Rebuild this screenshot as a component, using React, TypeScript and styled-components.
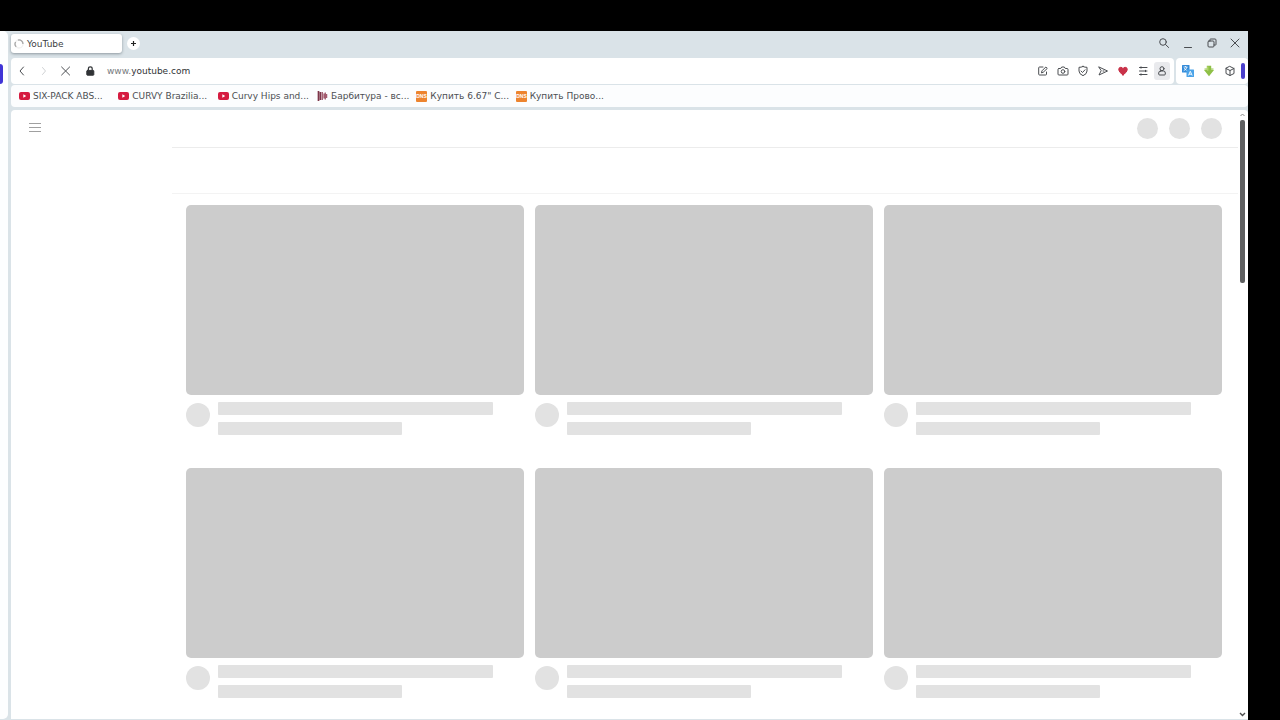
import React from "react";
import styled, { createGlobalStyle } from "styled-components";

const GlobalStyle = createGlobalStyle`
  *, *::before, *::after { box-sizing: border-box; }
  body { margin: 0; background: #000; font-family: "DejaVu Sans", sans-serif; color: #3c4043; }
  button, input { font: inherit; color: inherit; border: 0; padding: 0; background: none; }
`;

const Desktop = styled.div`
  height: 100vh;
  padding: 31px 32px 0 0;
  display: flex;
  overflow: hidden;
`;

const Browser = styled.div`
  flex: 1;
  min-width: 0;
  display: flex;
  gap: 3px;
  background: #dae3e8;
`;

const Panel = styled.aside`
  width: 8px;
  margin-bottom: 1px;
  padding-top: 33px;
  background: #fdfeff;
  border-radius: 0 5px 5px 0;
`;

const PanelHandle = styled.button`
  display: block;
  width: 3px;
  height: 20px;
  background: #4034d6;
  border-radius: 0 3px 3px 0;
`;

const Main = styled.div`
  flex: 1;
  min-width: 0;
  display: flex;
  flex-direction: column;
`;

const TabBar = styled.header`
  height: 27px;
  padding: 3px 2px 0 0;
  display: flex;
  align-items: flex-start;
`;

const Tab = styled.div`
  width: 111px;
  height: 19px;
  padding-left: 3px;
  display: flex;
  align-items: center;
  gap: 3px;
  background: #fff;
  border-radius: 3px;
  box-shadow: 0 1px 3px #8e989f;
  font-size: 9px;
  line-height: 12px;
`;

const NewTab = styled.button`
  width: 13px;
  height: 13px;
  margin: 3px 0 0 5px;
  display: grid;
  place-items: center;
  background: #fff;
  border-radius: 50%;
  color: #222;
`;

const WindowControls = styled.div`
  margin-left: auto;
  display: flex;
`;

const IconButton = styled.button<{ $width?: number; $active?: boolean; $color?: string }>`
  flex: none;
  width: ${(p) => p.$width ?? 20}px;
  height: 18px;
  display: grid;
  place-items: center;
  color: ${(p) => p.$color ?? "#4a4d51"};
  ${(p) => p.$active && "background: #e9eaed; border-radius: 3px; margin: 0 2px 0 1px;"}
`;

const ToolRow = styled.div`
  height: 26px;
  display: flex;
  gap: 2px;
  margin-bottom: 1px;
`;

const Toolbar = styled.nav`
  flex: 1;
  min-width: 0;
  padding-right: 2px;
  display: flex;
  align-items: center;
  background: #fff;
  border-radius: 4px;
`;

const Extensions = styled.div`
  width: 72px;
  padding-left: 1px;
  display: flex;
  align-items: center;
  background: #fff;
  border-radius: 4px;
`;

const ExtensionHandle = styled.button`
  width: 4px;
  height: 16px;
  background: #4a3fcc;
  border-radius: 2px;
`;

const Address = styled.label`
  flex: 1;
  min-width: 0;
  padding-left: 4px;
  display: flex;
  align-items: center;
  font-size: 9px;
  color: #777b7e;
`;

const AddressInput = styled.input`
  flex: 1;
  min-width: 0;
  color: #303336;
  outline: none;
`;

const BookmarkBar = styled.nav`
  height: 22px;
  margin-bottom: 3px;
  padding: 0 8px;
  background: #fcfdfe;
  border-radius: 4px;
`;

const BookmarkList = styled.div`
  height: 100%;
  max-width: 596px;
  display: grid;
  grid-template-columns: repeat(6, 1fr);
  align-items: center;
`;

const Bookmark = styled.a`
  display: flex;
  align-items: center;
  gap: 3px;
  font-size: 9px;
  line-height: 12px;
  color: #4b4e52;
  text-decoration: none;
  white-space: nowrap;
`;

const Viewport = styled.div`
  flex: 1;
  min-height: 0;
  margin-bottom: 1px;
  display: flex;
  background: #fff;
  border-radius: 4px 4px 0 0;
  overflow: hidden;
`;

const Guide = styled.div`
  flex: none;
  width: 161px;
  padding: 9px 14px;
`;

const Page = styled.main`
  flex: 1;
  min-width: 0;
`;

const Masthead = styled.div`
  height: 38px;
  padding-right: 16px;
  display: flex;
  align-items: center;
  justify-content: flex-end;
  gap: 11px;
  border-bottom: 1px solid #ececec;
`;

const Chips = styled.div`
  height: 46px;
  border-bottom: 1px solid #f3f3f3;
`;

const Circle = styled.div<{ $size: number }>`
  flex: none;
  width: ${(p) => p.$size}px;
  height: ${(p) => p.$size}px;
  border-radius: 50%;
  background: #e2e2e2;
`;

const Feed = styled.div`
  padding: 11px 16px 0 14px;
  display: grid;
  grid-template-columns: repeat(3, 1fr);
  gap: 33px 11px;
`;

const Thumbnail = styled.div`
  aspect-ratio: 16 / 9;
  border-radius: 5px;
  background: #ccc;
`;

const Details = styled.div`
  padding-top: 7px;
  display: flex;
  align-items: center;
  gap: 8px;
`;

const Lines = styled.div`
  flex: 1;
  height: 33px;
  display: flex;
  flex-direction: column;
  justify-content: space-between;
`;

const Line = styled.div<{ $width: string }>`
  width: ${(p) => p.$width};
  height: 13px;
  background: #e2e2e2;
  border-radius: 1px;
`;

const AvatarSlot = styled.div`
  align-self: flex-start;
  padding-top: 1px;
`;

const Scrollbar = styled.div`
  flex: none;
  width: 10px;
  padding: 2px 1px 2px 0;
  display: flex;
  flex-direction: column;
  align-items: center;
  gap: 2px;
`;

const ScrollThumb = styled.div`
  width: 5px;
  height: 27%;
  background: #5e5f60;
  border-radius: 2px;
`;

const ScrollSpace = styled.div`
  flex: 1;
`;

type IconProps = { size?: number; children: React.ReactNode; weight?: number };

const Icon = ({ size = 12, weight = 1, children }: IconProps) => (
  <svg width={size} height={size} viewBox="0 0 12 12" fill="none" stroke="currentColor" strokeWidth={weight} strokeLinecap="round" strokeLinejoin="round" aria-hidden="true">
    {children}
  </svg>
);

const YouTubeIcon = () => (
  <svg width="11" height="8" viewBox="0 0 11 8" aria-hidden="true">
    <rect width="11" height="8" rx="2" fill="#d51b40" />
    <path d="M4.3 2.3v3.4L7.2 4z" fill="#fff" />
  </svg>
);

const WaveIcon = () => (
  <svg width="11" height="12" viewBox="0 0 11 12" aria-hidden="true">
    <path d="M1.5 1v10M3.5 2v8" stroke="#7d3549" strokeWidth="1.7" />
    <path d="M5.3 2v8M7 3.5v5M8.3 2.5v7M9.6 4v4" stroke="#a35c6f" strokeWidth="1.3" />
  </svg>
);

const StoreIcon = () => (
  <svg width="11" height="11" viewBox="0 0 11 11" aria-hidden="true">
    <rect width="11" height="11" rx="1" fill="#ed842f" />
    <text x="5.5" y="7.2" textAnchor="middle" fontFamily="Liberation Sans, sans-serif" fontSize="5" fontWeight="700" fill="#fff">DNS</text>
  </svg>
);

const bookmarks = [
  { title: "SIX-PACK ABS...", icon: <YouTubeIcon /> },
  { title: "CURVY Brazilia...", icon: <YouTubeIcon /> },
  { title: "Curvy Hips and...", icon: <YouTubeIcon /> },
  { title: "Барбитура - вс...", icon: <WaveIcon /> },
  { title: 'Купить 6.67" С...', icon: <StoreIcon /> },
  { title: "Купить Прово...", icon: <StoreIcon /> },
];

const VideoSkeleton = () => (
  <article>
    <Thumbnail />
    <Details>
      <AvatarSlot><Circle $size={24} /></AvatarSlot>
      <Lines>
        <Line $width="90%" />
        <Line $width="60%" />
      </Lines>
    </Details>
  </article>
);

export default function App() {
  return (
    <>
      <GlobalStyle />
      <Desktop>
        <Browser>
          <Panel><PanelHandle aria-label="Open side panel" /></Panel>
          <Main>
            <TabBar>
              <Tab>
                <svg width="10" height="10" viewBox="0 0 10 10" fill="none" strokeWidth="1.3" aria-hidden="true">
                  <circle cx="5" cy="5" r="4" stroke="#f0f0f0" />
                  <path d="M2.2 7.8A4 4 0 0 1 1.6 3M4 1.1A4 4 0 0 1 9 5" stroke="#a7a7a7" />
                </svg>
                YouTube
              </Tab>
              <NewTab aria-label="New tab">
                <svg width="7" height="7" viewBox="0 0 7 7" stroke="currentColor" strokeWidth="1.2" aria-hidden="true"><path d="M3.5 1v5M1 3.5h5" /></svg>
              </NewTab>
              <WindowControls>
                <IconButton $width={24} aria-label="Search tabs"><Icon><circle cx="5" cy="5" r="3.3" /><path d="m7.6 7.6 3 2.9" /></Icon></IconButton>
                <IconButton $width={24} aria-label="Minimize"><Icon><path d="M2.5 10.5h7" /></Icon></IconButton>
                <IconButton $width={24} aria-label="Restore"><Icon><rect x="2" y="4" width="6" height="6" rx="1" /><path d="M4 4V2.5q0-.5.5-.5H9q1 0 1 1v4.5q0 .5-.5.5H8" /></Icon></IconButton>
                <IconButton $width={22} aria-label="Close"><Icon><path d="m2 2 8 8M10 2 2 10" /></Icon></IconButton>
              </WindowControls>
            </TabBar>

            <ToolRow>
              <Toolbar>
                <IconButton $width={22} aria-label="Back"><Icon><path d="M7.5 2 4 6l3.5 4" /></Icon></IconButton>
                <IconButton $width={22} $color="#d0d2d4" aria-label="Forward"><Icon><path d="m4.5 2.5 3 3.5-3 3.5" /></Icon></IconButton>
                <IconButton $width={22} aria-label="Stop loading"><Icon><path d="m1.6 2 8 8M9.6 2l-8 8" /></Icon></IconButton>
                <IconButton $width={26} $color="#303336" aria-label="Site information">
                  <Icon><rect x="2.8" y="5.4" width="7" height="4.8" rx=".6" fill="currentColor" /><path d="M4.4 5V3.8a1.9 1.9 0 0 1 3.8 0V5" strokeWidth="1.2" /></Icon>
                </IconButton>
                <Address>
                  www.
                  <AddressInput type="text" defaultValue="youtube.com" aria-label="Address" />
                </Address>
                <IconButton aria-label="Edit page"><Icon><path d="M6 2H2.5q-.8 0-.8.8v6.4q0 .8.8.8h6.2q.8 0 .8-.8V7M4.5 7.5 5 5.8 8.8 2l1.5 1.4-3.9 3.7z" /></Icon></IconButton>
                <IconButton aria-label="Snapshot"><Icon><path d="M2 3.5h1.7L4.7 2h2.6l1 1.5H10q1 0 1 1v4.7q0 .8-1 .8H2q-1 0-1-.8V4.5q0-1 1-1z" /><circle cx="6" cy="6.5" r="1.8" /></Icon></IconButton>
                <IconButton aria-label="Ad blocker"><Icon><path d="M6 1.5Q8 2.5 10 2.3V6q0 3-4 4.7Q2 9 2 6V2.3q2 .2 4-.8zM4 6l1.5 1.5L8 4.8" /></Icon></IconButton>
                <IconButton aria-label="Send"><Icon><path d="m2 2 8.5 4L2 10l2-4zM6 6h1" /></Icon></IconButton>
                <IconButton $color="#c93249" aria-label="Bookmark page"><Icon><path d="M6 10Q1.7 7 1.7 4.6 1.7 2.3 3.8 2.3 5.3 2.3 6 3.6q.7-1.3 2.2-1.3 2.1 0 2.1 2.3Q10.300 7 6 10z" fill="currentColor" /></Icon></IconButton>
                <IconButton aria-label="Easy setup"><Icon><path d="M2.500 2.500h7.500M2.500 6h7.500M2.500 9.500h7.500" /><path d="M4 1.800v1.400M8.500 5.300v1.400M4 8.800v1.400" /></Icon></IconButton>
                <IconButton $width={16} $active aria-label="Profile"><Icon><circle cx="6" cy="3.700" r="2" /><path d="M4.500 6h3q1.800 0 1.800 2v1q0 1-1 1H3.700q-1 0-1-1V8q0-2 1.800-2z" /></Icon></IconButton>
              </Toolbar>
              <Extensions>
                <IconButton $width={22} aria-label="Translate">
                  <svg width="12" height="12" viewBox="0 0 12 12" aria-hidden="true">
                    <rect width="7.5" height="7.5" rx=".5" fill="#338bd9" />
                    <rect x="4.5" y="4.5" width="7.5" height="7.5" rx=".5" fill="#4ba3e8" />
                    <path d="M1.5 2h4M3.5 1v1M5 2Q4.5 4.5 1.7 5.7M2.3 3q.7 1.8 2.3 2.3" stroke="#fff" strokeWidth=".8" fill="none" />
                    <path d="m6.4 10.5 1.9-4.2 1.9 4.2M7 9.2h2.6" stroke="#fff" strokeWidth=".9" fill="none" />
                  </svg>
                </IconButton>
                <IconButton aria-label="Downloader">
                  <svg width="12" height="12" viewBox="0 0 12 12" aria-hidden="true">
                    <path d="M1.500 3.200h9v2h-9z" fill="#bfdc91" />
                    <path d="M3.800.8h4.400v4.200h2.800L6 11.300 1 5h2.800z" fill="#8fc047" />
                    <path d="M4.800 1.500v4.300" stroke="#c4df7d" />
                  </svg>
                </IconButton>
                <IconButton $width={22} aria-label="Extensions"><Icon><path d="m6 1.500 4 2v5l-4 2-4-2v-5zM2 3.500l4 2 4-2M6 5.500v5" /></Icon></IconButton>
                <ExtensionHandle aria-label="Resize extensions" />
              </Extensions>
            </ToolRow>

            <BookmarkBar aria-label="Bookmarks">
              <BookmarkList>
                {bookmarks.map((b) => <Bookmark href="#" key={b.title}>{b.icon}{b.title}</Bookmark>)}
              </BookmarkList>
            </BookmarkBar>

            <Viewport>
              <Guide>
                <IconButton $color="#a0a0a0" aria-label="Guide">
                  <svg width="12" height="10" viewBox="0 0 12 10" stroke="currentColor" aria-hidden="true"><path d="M0 .5h12M0 4.500h12M0 8.500h12" /></svg>
                </IconButton>
              </Guide>
              <Page>
                <Masthead>
                  {[0, 1, 2].map((i) => <Circle $size={21} key={i} />)}
                </Masthead>
                <Chips />
                <Feed>
                  {[0, 1, 2, 3, 4, 5].map((i) => <VideoSkeleton key={i} />)}
                </Feed>
              </Page>
              <Scrollbar>
                <svg width="7" height="6" viewBox="0 0 7 6" fill="none" stroke="#8b8b8b" aria-hidden="true"><path d="m1.500 4 2-2 2 2" /></svg>
                <ScrollThumb />
                <ScrollSpace />
                <svg width="7" height="6" viewBox="0 0 7 6" fill="none" stroke="#505050" strokeWidth="1.4" aria-hidden="true"><path d="m1 2 2.500 2.500L6 2" /></svg>
              </Scrollbar>
            </Viewport>
          </Main>
        </Browser>
      </Desktop>
    </>
  );
}
